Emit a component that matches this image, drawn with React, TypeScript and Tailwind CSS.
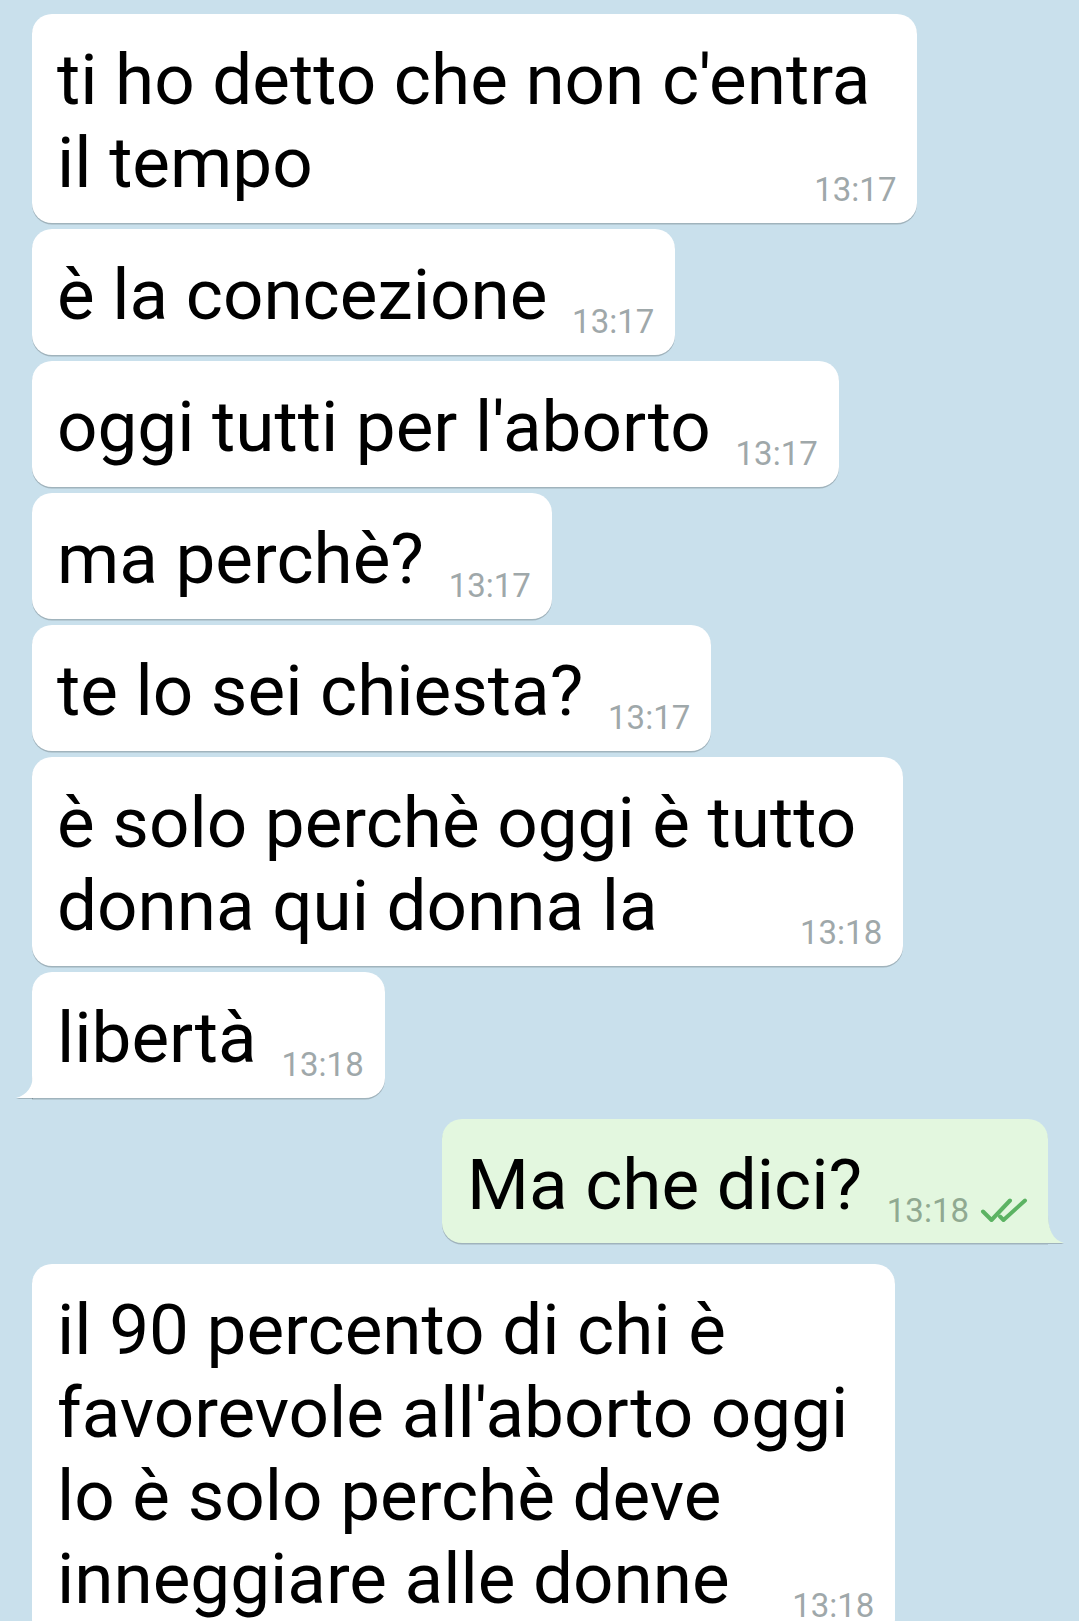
import React from 'react';

type Msg = {
  id: number;
  lines: string[];
  time: string;
  out?: boolean;
  tail?: boolean;
};

const MESSAGES: Msg[] = [
  { id: 1, lines: ["ti ho detto che non c'entra", 'il tempo'], time: '13:17' },
  { id: 2, lines: ['è la concezione'], time: '13:17' },
  { id: 3, lines: ["oggi tutti per l'aborto"], time: '13:17' },
  { id: 4, lines: ['ma perchè?'], time: '13:17' },
  { id: 5, lines: ['te lo sei chiesta?'], time: '13:17' },
  { id: 6, lines: ['è solo perchè oggi è tutto', 'donna qui donna la'], time: '13:18' },
  { id: 7, lines: ['libertà'], time: '13:18', tail: true },
  { id: 8, lines: ['Ma che dici?'], time: '13:18', out: true, tail: true },
  {
    id: 9,
    lines: ['il 90 percento di chi è', "favorevole all'aborto oggi", 'lo è solo perchè deve', 'inneggiare alle donne'],
    time: '13:18',
  },
];

function DoubleCheck() {
  return (
    <svg width="48" height="26" viewBox="0 0 48 26" fill="none" className="ml-[11px] mb-[3px]">
      <path d="M3 13.5 L11.5 22 L30 2.5" stroke="#5cb363" strokeWidth="4" strokeLinecap="round" strokeLinejoin="round" />
      <path d="M20 18.5 L23.5 22 L45 2.5" stroke="#5cb363" strokeWidth="4" strokeLinecap="round" strokeLinejoin="round" />
    </svg>
  );
}

function Bubble({ msg }: { msg: Msg }) {
  const multi = msg.lines.length > 1;
  return (
    <div
      className={`relative rounded-[20px] pt-[24px] shadow-[0_1.5px_0.5px_rgba(0,0,0,0.2)] ${
        msg.out
          ? 'self-end mr-[31px] bg-[#e3f7df] pl-[25px] pr-[20px] pb-[17px] rounded-br-none'
          : `self-start bg-white pl-[25px] pb-[19px] ${multi ? 'pr-[47px]' : 'pr-[22px]'} ${msg.tail ? 'rounded-bl-none' : ''}`
      }`}
    >
      <p className="text-[71px] leading-[83px] text-black whitespace-nowrap">
        {msg.lines.map((line, i) => (
          <React.Fragment key={i}>
            {line}
            {i < msg.lines.length - 1 ? <br /> : null}
          </React.Fragment>
        ))}
        {!multi && <span className={`inline-block ${msg.out ? 'w-[166px]' : 'w-[106px]'}`} />}
      </p>
      <div
        className={`absolute flex items-end text-[33px] leading-none ${
          msg.out ? 'bottom-[16px] right-[20px] text-[#90a991]' : 'bottom-[17px] right-[21px] text-[#9fa8aa]'
        }`}
      >
        <span>{msg.time}</span>
        {msg.out && <DoubleCheck />}
      </div>
      {msg.tail && !msg.out && (
        <svg
          width="17"
          height="24"
          viewBox="0 0 17 24"
          className="absolute left-[-16.5px] bottom-0 drop-shadow-[0_1.5px_0.5px_rgba(0,0,0,0.2)]"
        >
          <path d="M17 0 C17 13 11 21 0 24 L17 24 Z" fill="#ffffff" />
        </svg>
      )}
      {msg.tail && msg.out && (
        <svg
          width="16"
          height="30"
          viewBox="0 0 16 30"
          className="absolute right-[-15.5px] bottom-0 drop-shadow-[0_1.5px_0.5px_rgba(0,0,0,0.2)]"
        >
          <path d="M0 0 C0 17 5 27 16 30 L0 30 Z" fill="#e3f7df" />
        </svg>
      )}
    </div>
  );
}

export default function App() {
  return (
    <div className="w-full min-h-screen h-[1621px] overflow-hidden bg-[#c9e0ec] font-['Roboto',sans-serif]">
      <div className="flex flex-col pt-[14px] pl-[32px]">
        {MESSAGES.map((msg, i) => {
          const prev = MESSAGES[i - 1];
          const switched = prev && !!prev.out !== !!msg.out;
          return (
            <div key={msg.id} className={`flex flex-col ${i === 0 ? '' : switched ? 'mt-[21px]' : 'mt-[6px]'}`}>
              <Bubble msg={msg} />
            </div>
          );
        })}
      </div>
    </div>
  );
}
